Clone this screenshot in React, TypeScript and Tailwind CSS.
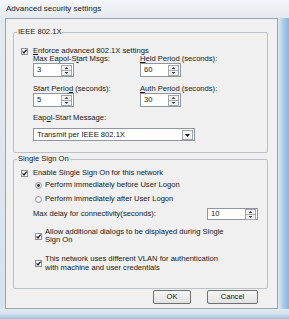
import React from 'react'

const Check = ({ checked = true }: { checked?: boolean }) => (
  <svg width="7" height="7" viewBox="0 0 7 7" className="shrink-0">
    <rect x="0.5" y="0.5" width="6" height="6" fill="#fdfdfd" stroke="#8a9096" />
    {checked && <path d="M1.6 3.4 L3 5 L5.6 1.6" fill="none" stroke="#1c1c1c" strokeWidth="1.3" />}
  </svg>
)

const Radio = ({ checked = false }: { checked?: boolean }) => (
  <svg width="7" height="7" viewBox="0 0 7 7" className="shrink-0">
    <circle cx="3.5" cy="3.5" r="3" fill="#fbfbfb" stroke="#8a9096" />
    {checked && <circle cx="3.5" cy="3.5" r="1.4" fill="#2a2a2a" />}
  </svg>
)

const SpinButtons = () => (
  <svg width="11" height="11" viewBox="0 0 11 11" className="shrink-0">
    <rect x="0.5" y="0.5" width="10" height="10" fill="#f3f3f3" stroke="#a2a6aa" />
    <line x1="1" y1="5.5" x2="10" y2="5.5" stroke="#a2a6aa" />
    <path d="M3.5 4 L7.5 4 L5.5 2 Z" fill="#3a3a3a" />
    <path d="M3.5 7 L7.5 7 L5.5 9 Z" fill="#3a3a3a" />
  </svg>
)

const Spinner = ({ value, width, height }: { value: string; width: string; height: string }) => (
  <div className={`${width} ${height} flex items-center justify-between border border-[#8e979f] bg-white pl-[3px] pr-[1px]`}>
    <span className="leading-[8px]">{value}</span>
    <SpinButtons />
  </div>
)

const Legend = ({ children }: { children: React.ReactNode }) => (
  <span className="-mt-[5px] ml-[3px] block w-fit bg-[#f0f0f0] px-[1px] leading-[8px]">{children}</span>
)

const Field = ({ label, value }: { label: React.ReactNode; value: string }) => (
  <div className="flex flex-col">
    <span className="leading-[8px]">{label}</span>
    <Spinner value={value} width="w-[41px]" height="h-[14px]" />
  </div>
)

export default function App() {
  return (
    <div className="flex h-[319px] w-[289px] flex-col overflow-hidden bg-[#e4e9ee] font-['Liberation_Sans',Arial,sans-serif] text-[7.6px] text-[#161616]">
      <div className="flex h-[18px] shrink-0 items-center bg-gradient-to-b from-[#f5f8fa] to-[#e3e9ef] pl-[6px] text-[8px] text-[#1a1a1a]">
        Advanced security settings
      </div>

      <div className="flex flex-1">
        <div className="w-[5px] bg-gradient-to-b from-[#e6eaee] to-[#d6e2ec]" />

        <div className="flex w-[273px] flex-col border border-[#9aa4ae] bg-[#f0f0f0] pt-[13px] pl-[7px]">
          <div className="flex h-[121px] w-[255px] flex-col rounded-[2px] border border-[#bcc2c8]">
            <Legend>IEEE 802.1X</Legend>
            <div className="mt-[11px] flex h-[8px] items-center gap-[5px] pl-[7px]">
              <Check />
              <span className="leading-[8px]">
                <span className="underline">E</span>nforce advanced 802.1X settings
              </span>
            </div>
            <div className="grid grid-cols-[107px_auto] pl-[19px]">
              <Field
                label={<>Max Eapol-S<span className="underline">t</span>art Msgs:</>}
                value="3"
              />
              <Field
                label={<><span className="underline">H</span>eld Period (seconds):</>}
                value="60"
              />
              <div className="mt-[8px]">
                <Field
                  label={<>Start Perio<span className="underline">d</span> (seconds):</>}
                  value="5"
                />
              </div>
              <div className="mt-[8px]">
                <Field
                  label={<><span className="underline">A</span>uth Period (seconds):</>}
                  value="30"
                />
              </div>
            </div>
            <div className="mt-[7px] pl-[19px] leading-[8px]">
              Eap<span className="underline">o</span>l-Start Message:
            </div>
            <div className="mt-[6px] ml-[19px] flex h-[13px] w-[162px] items-center justify-between border border-[#8e979f] bg-white pl-[3px] pr-[1px]">
              <span className="leading-[8px]">Transmit per IEEE 802.1X</span>
              <svg width="11" height="10" viewBox="0 0 11 10" className="shrink-0">
                <rect x="0.5" y="0.5" width="10" height="9" fill="#f3f3f3" stroke="#a2a6aa" />
                <path d="M3 4 L8 4 L5.5 7 Z" fill="#1a1a1a" />
              </svg>
            </div>
          </div>

          <div className="mt-[6px] flex h-[130px] w-[255px] flex-col rounded-[2px] border border-[#bcc2c8]">
            <Legend>Single Sign On</Legend>
            <div className="mt-[6px] flex h-[8px] items-center gap-[5px] pl-[7px]">
              <Check />
              <span className="leading-[8px]">Enable Single Sign On for this network</span>
            </div>
            <div className="mt-[4px] flex h-[8px] items-center gap-[3px] pl-[21px]">
              <Radio checked />
              <span className="leading-[8px]">Perform immediately before User Logon</span>
            </div>
            <div className="mt-[6px] flex h-[8px] items-center gap-[3px] pl-[21px]">
              <Radio />
              <span className="leading-[8px]">Perform immediately after User Logon</span>
            </div>
            <div className="mt-[5px] flex h-[12px] items-center justify-between pl-[19px] pr-[9px]">
              <span className="leading-[8px]">Max delay for connectivity(seconds):</span>
              <Spinner value="10" width="w-[51px]" height="h-[12px]" />
            </div>
            <div className="mt-[8px] flex items-center gap-[3px] pl-[21px]">
              <Check />
              <span className="leading-[8px]">
                Allow additional dialogs to be displayed during Single
                <br />
                Sign On
              </span>
            </div>
            <div className="mt-[11px] flex items-center gap-[3px] pl-[21px]">
              <Check />
              <span className="leading-[8.5px]">
                This network uses different VLAN for authentication
                <br />
                with machine and user credentials
              </span>
            </div>
          </div>

          <div className="mt-[1px] flex justify-end gap-[16px] pr-[19px]">
            <button className="flex h-[14px] w-[38px] items-center justify-center rounded-[2px] border border-[#707070] bg-gradient-to-b from-[#f6f6f6] to-[#e2e2e2]">
              OK
            </button>
            <button className="flex h-[14px] w-[51px] items-center justify-center rounded-[2px] border border-[#707070] bg-gradient-to-b from-[#f6f6f6] to-[#e2e2e2]">
              Cancel
            </button>
          </div>
        </div>

        <div className="w-[11px] bg-gradient-to-r from-[#dfe9f2] via-[#a9cbe7] to-[#86b5dc]" />
      </div>

      <div className="h-[10px] shrink-0 bg-gradient-to-b from-[#e4eaef] via-[#d3e1ec] to-[#98c0e2]" />
    </div>
  )
}
